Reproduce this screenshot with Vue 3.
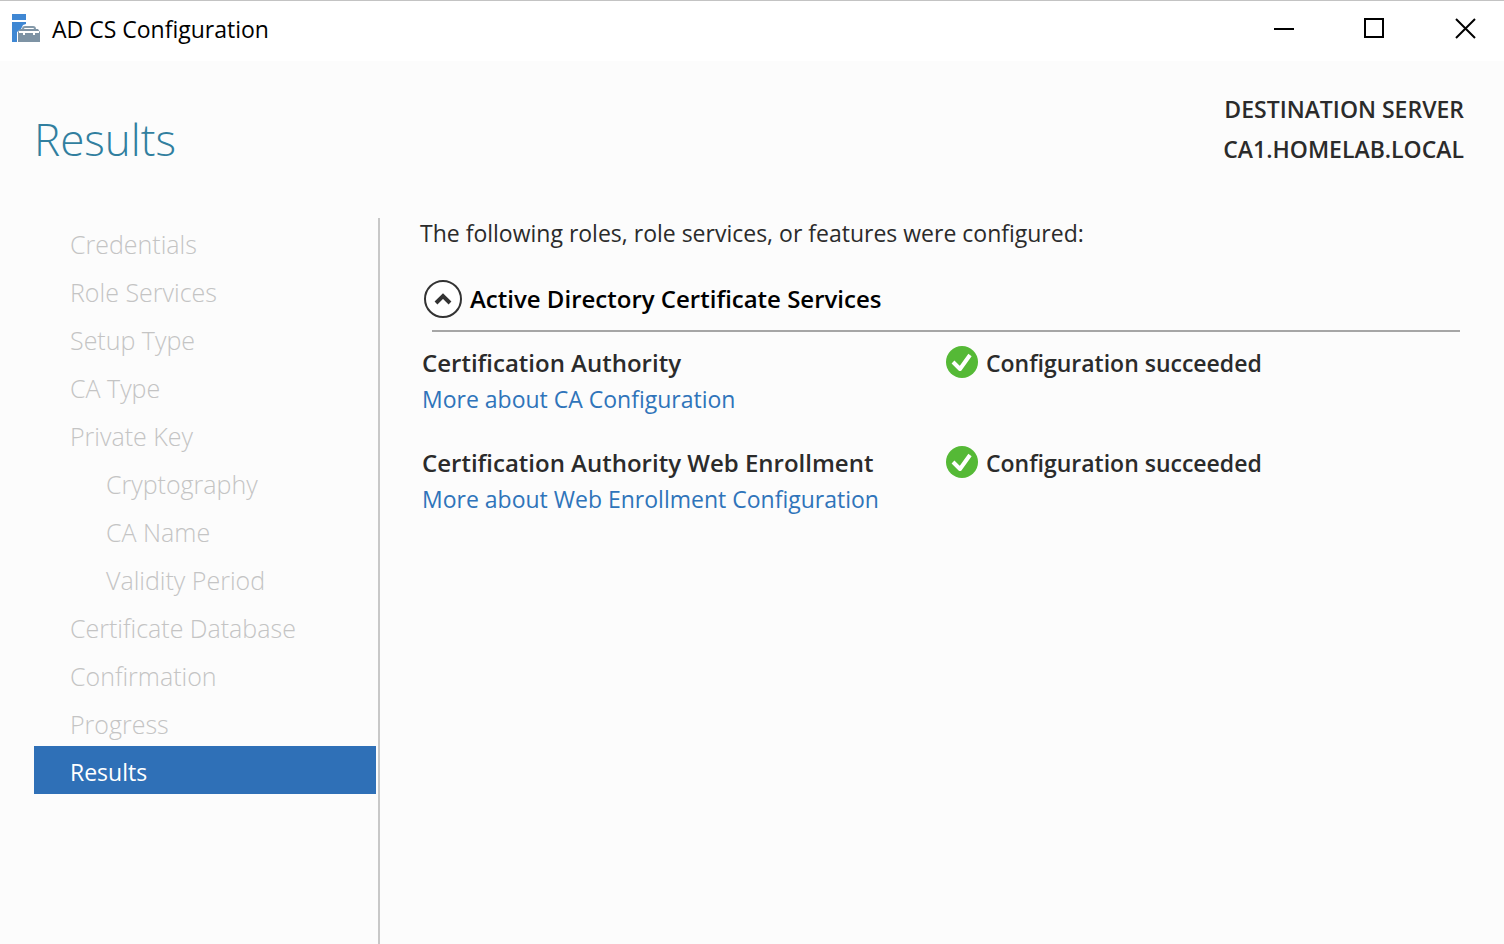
<script setup>
const steps = [
  { label: 'Credentials' },
  { label: 'Role Services' },
  { label: 'Setup Type' },
  { label: 'CA Type' },
  { label: 'Private Key' },
  { label: 'Cryptography', nested: true },
  { label: 'CA Name', nested: true },
  { label: 'Validity Period', nested: true },
  { label: 'Certificate Database' },
  { label: 'Confirmation' },
  { label: 'Progress' },
  { label: 'Results', current: true }
]

const results = [
  { name: 'Certification Authority', link: 'More about CA Configuration', status: 'Configuration succeeded' },
  { name: 'Certification Authority Web Enrollment', link: 'More about Web Enrollment Configuration', status: 'Configuration succeeded' }
]
</script>

<template>
  <div class="window">
    <div class="titlebar">
      <svg class="app-icon" width="30" height="30" viewBox="0 0 30 30" aria-hidden="true">
        <path d="M1 0h14v6H1z" fill="#3f87d3" />
        <path d="M1 8h14v2l-3 1-2 4-4 3v10H1z" fill="#3f87d3" />
        <path d="M12 16v-1q0-2 2-2h8q2 0 2 2v1" fill="none" stroke="#8499a9" stroke-width="2" />
        <path d="M9 15h18l2 3v10H7V18z" fill="#7e93a4" />
        <path d="M8 18h20M13 17v4M23 17v4" fill="none" stroke="#fff" stroke-width="2" />
      </svg>
      <span class="title">AD CS Configuration</span>
      <div class="controls">
        <button type="button" aria-label="Minimize">
          <svg width="22" height="22" viewBox="0 0 22 22"><path d="M3 11h20" /></svg>
        </button>
        <button type="button" aria-label="Maximize">
          <svg width="22" height="22" viewBox="0 0 22 22"><path d="M2 1h18v18H2z" /></svg>
        </button>
        <button type="button" aria-label="Close">
          <svg width="22" height="22" viewBox="0 0 22 22"><path d="M1 1l19 19M20 1L1 20" /></svg>
        </button>
      </div>
    </div>

    <header class="header">
      <h1>Results</h1>
      <div class="server">
        <div>DESTINATION SERVER</div>
        <div>CA1.HOMELAB.LOCAL</div>
      </div>
    </header>

    <div class="body">
      <nav class="steps">
        <button
          v-for="step in steps"
          :key="step.label"
          type="button"
          :disabled="!step.current"
          :class="{ nested: step.nested, current: step.current }"
        >{{ step.label }}</button>
      </nav>

      <main class="content">
        <p class="intro">The following roles, role services, or features were configured:</p>
        <button type="button" class="group" aria-expanded="true">
          <svg width="40" height="40" viewBox="0 0 40 40" aria-hidden="true">
            <circle cx="21" cy="20" r="18" fill="#fff" stroke="#333" stroke-width="2" />
            <path d="M14 24l7-7 7 7" fill="none" stroke="#333" stroke-width="4" />
          </svg>
          <span>Active Directory Certificate Services</span>
        </button>
        <hr>
        <section v-for="item in results" :key="item.name" class="result">
          <div>
            <h2>{{ item.name }}</h2>
            <a href="#">{{ item.link }}</a>
          </div>
          <div class="status">
            <svg width="32" height="32" viewBox="0 0 32 32" aria-hidden="true">
              <circle cx="16" cy="15" r="16" fill="#55b936" />
              <path d="M7 15l7 7L24 8" fill="none" stroke="#fff" stroke-width="4" stroke-linejoin="round" />
            </svg>
            <span>{{ item.status }}</span>
          </div>
        </section>
      </main>
    </div>
  </div>
</template>

<style>
body {
  background: #fcfcfc;
}
</style>

<style scoped>
.window {
  display: flex;
  flex-direction: column;
  min-height: 100vh;
  box-sizing: border-box;
  border-top: 1px solid #c3c3c3;
  background: #fcfcfc;
  color: #2b2b2b;
  font: 400 23px/36px "Open Sans", "Noto Sans", sans-serif;
}
svg {
  flex: none;
  overflow: visible;
}
button {
  border: 0;
  padding: 0;
  background: none;
  color: inherit;
  font: inherit;
}
.titlebar {
  display: flex;
  align-items: center;
  height: 60px;
  padding-left: 11px;
  background: #fff;
  color: #000;
}
.app-icon {
  margin-right: 11px;
  padding-bottom: 4px;
}
.title {
  padding-bottom: 4px;
}
.controls {
  display: flex;
  margin-left: auto;
}
.controls button {
  display: flex;
  align-items: center;
  justify-content: center;
  box-sizing: border-box;
  width: 92px;
  height: 60px;
  padding: 0 0 4px 16px;
}
.controls path {
  fill: none;
  stroke: #000;
  stroke-width: 2;
}
.header {
  display: flex;
  justify-content: space-between;
  height: 157px;
  padding: 0 40px 0 34px;
}
h1 {
  margin: 48px 0 0;
  color: #317f9f;
  font-size: 44px;
  font-weight: 300;
  line-height: 60px;
}
.server {
  padding-top: 28px;
  font-weight: 600;
  line-height: 40px;
  text-align: right;
}
.body {
  display: flex;
  flex: 1;
}
.steps {
  display: flex;
  flex: none;
  flex-direction: column;
  box-sizing: border-box;
  width: 380px;
  padding: 0 2px 0 34px;
  border-right: 2px solid #c8c8c8;
}
.steps button {
  height: 48px;
  padding: 4px 0 0 36px;
  color: #c4c4c4;
  font-size: 25px;
  font-weight: 300;
  text-align: left;
}
.steps .nested {
  padding-left: 72px;
}
.steps .current {
  background: #2f70b7;
  color: #fff;
  font-size: 23px;
  font-weight: 400;
}
.content {
  flex: 1;
  padding: 0 44px 0 42px;
}
.intro {
  margin: 0 0 31px -2px;
  line-height: 30px;
}
.group {
  display: flex;
  align-items: center;
  gap: 8px;
  color: #000;
  font-size: 24px;
  font-weight: 600;
}
hr {
  height: 2px;
  margin: 11px 0 13px 10px;
  border: 0;
  background: #a6a6a6;
}
.result {
  display: grid;
  grid-template-columns: 524px 1fr;
  align-items: start;
  margin-bottom: 28px;
}
h2 {
  margin: 0;
  font: inherit;
  font-size: 24px;
  font-weight: 600;
}
a {
  color: #2f74ba;
  text-decoration: none;
}
.status {
  display: flex;
  align-items: center;
  gap: 8px;
  font-weight: 600;
}
</style>
